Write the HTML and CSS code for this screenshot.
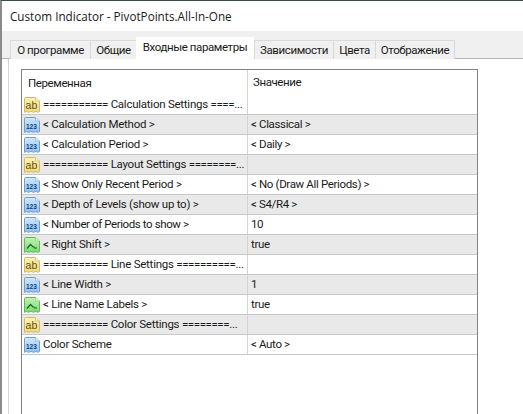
FILE: index.html
```html
<!DOCTYPE html>
<html lang="ru">
<head>
<meta charset="utf-8">
<title>Custom Indicator</title>
<link rel="stylesheet" href="styles.css">
</head>
<body>
<svg class="defs" width="0" height="0" aria-hidden="true">
  <defs>
    <linearGradient id="gy" x1="0" y1="0" x2="0" y2="1"><stop offset="0" stop-color="#fdf3b4"/><stop offset="1" stop-color="#f1d878"/></linearGradient>
    <linearGradient id="gb" x1="0" y1="0" x2="0" y2="1"><stop offset="0" stop-color="#d3e8fb"/><stop offset="1" stop-color="#8fc0ee"/></linearGradient>
    <linearGradient id="gg" x1="0" y1="0" x2="0" y2="1"><stop offset="0" stop-color="#c4f2b4"/><stop offset="1" stop-color="#76dc6c"/></linearGradient>
    <symbol id="doc-ab" viewBox="0 0 16 16">
      <path d="M.5 1.500a1 1 0 0 1 1-1h10l4 3.500v10.500l-1.500.8-2-.8-2.500.8-2.500-.8-2.500.8-2-.8-2 .8z" fill="url(#gy)" stroke="#cdb86e"/>
      <path d="M11.500 .5v3.500h4" fill="#fff8d8" stroke="#d8c987"/>
      <text x="1.600" y="11.500" class="glyph glyph-ab">ab</text>
    </symbol>
    <symbol id="doc-123" viewBox="0 0 16 16">
      <path d="M.5 1.500a1 1 0 0 1 1-1h10l4 3.500v10.500l-1.500.8-2-.8-2.500.8-2.500-.8-2.500.8-2-.8-2 .8z" fill="url(#gb)" stroke="#6f9fcf"/>
      <path d="M11.500 .5v3.500h4" fill="#e8f3fd" stroke="#9cc0e2"/>
      <text x="2" y="11.500" class="glyph glyph-num">123</text>
    </symbol>
    <symbol id="doc-bool" viewBox="0 0 16 16">
      <path d="M.5 1.500a1 1 0 0 1 1-1h10l4 3.500v10.500l-1.500.8-2-.8-2.500.8-2.500-.8-2.500.8-2-.8-2 .8z" fill="url(#gg)" stroke="#62b65c"/>
      <path d="M11.500 .5v3.500h4" fill="#e6fadf" stroke="#97d68e"/>
      <path d="M3 11.500l3.500-4 2.500 2.500h1.500M10 11h3" fill="none" stroke="#14632a" stroke-width="1.200"/>
    </symbol>
  </defs>
</svg>
<div class="window">
  <header class="titlebar">Custom Indicator - PivotPoints.All-In-One</header>
  <nav class="tabs">
    <div class="tab tab-about">О программе</div>
    <div class="tab tab-common">Общие</div>
    <div class="tab tab-active">Входные параметры</div>
    <div class="tab tab-deps">Зависимости</div>
    <div class="tab tab-colors">Цвета</div>
    <div class="tab tab-view">Отображение</div>
  </nav>
  <main class="panel">
    <div class="list">
      <div class="row head"><div class="cell name-h">Переменная</div><div class="cell val head-val">Значение</div></div>
      <div class="row"><div class="cell name"><svg class="ico"><use href="#doc-ab"/></svg><span class="label"><span class="eq">===========</span> Calculation Settings <span class="eq">====</span>...</span></div><div class="cell val"></div></div>
      <div class="row alt"><div class="cell name"><svg class="ico"><use href="#doc-123"/></svg><span class="label">&lt; Calculation Method &gt;</span></div><div class="cell val">&lt; Classical &gt;</div></div>
      <div class="row"><div class="cell name"><svg class="ico"><use href="#doc-123"/></svg><span class="label">&lt; Calculation Period &gt;</span></div><div class="cell val">&lt; Daily &gt;</div></div>
      <div class="row alt"><div class="cell name"><svg class="ico"><use href="#doc-ab"/></svg><span class="label"><span class="eq">===========</span> Layout Settings <span class="eq">========</span>...</span></div><div class="cell val"></div></div>
      <div class="row"><div class="cell name"><svg class="ico"><use href="#doc-123"/></svg><span class="label">&lt; Show Only Recent Period &gt;</span></div><div class="cell val">&lt; No (Draw All Periods) &gt;</div></div>
      <div class="row alt"><div class="cell name"><svg class="ico"><use href="#doc-123"/></svg><span class="label">&lt; Depth of Levels (show up to) &gt;</span></div><div class="cell val">&lt; S4/R4 &gt;</div></div>
      <div class="row"><div class="cell name"><svg class="ico"><use href="#doc-123"/></svg><span class="label label-tight">&lt; Number of Periods to show &gt;</span></div><div class="cell val">10</div></div>
      <div class="row alt"><div class="cell name"><svg class="ico"><use href="#doc-bool"/></svg><span class="label">&lt; Right Shift &gt;</span></div><div class="cell val">true</div></div>
      <div class="row"><div class="cell name"><svg class="ico"><use href="#doc-ab"/></svg><span class="label"><span class="eq">===========</span> Line Settings <span class="eq">==========</span>...</span></div><div class="cell val"></div></div>
      <div class="row alt"><div class="cell name"><svg class="ico"><use href="#doc-123"/></svg><span class="label">&lt; Line Width &gt;</span></div><div class="cell val">1</div></div>
      <div class="row"><div class="cell name"><svg class="ico"><use href="#doc-bool"/></svg><span class="label">&lt; Line Name Labels &gt;</span></div><div class="cell val">true</div></div>
      <div class="row alt"><div class="cell name"><svg class="ico"><use href="#doc-ab"/></svg><span class="label"><span class="eq">===========</span> Color Settings <span class="eq">========</span>...</span></div><div class="cell val"></div></div>
      <div class="row"><div class="cell name"><svg class="ico"><use href="#doc-123"/></svg><span class="label">Color Scheme</span></div><div class="cell val">&lt; Auto &gt;</div></div>
    </div>
  </main>
</div>
</body>
</html>
```

FILE: styles.css
```css
* { box-sizing: border-box; }
html, body { margin: 0; height: 100%; overflow: hidden; background: #fff; }
body { font-family: Roboto, "Liberation Sans", sans-serif; font-size: 11.5px; letter-spacing: -0.25px; color: #1a1a1a; }
.defs { display: block; }
.glyph { font-family: "Liberation Sans", sans-serif; letter-spacing: 0; }
.glyph-ab { font-size: 10.500px; fill: #5f500c; }
.glyph-num { font-size: 6.500px; font-weight: 700; fill: #123f86; }

.window { height: 414px; display: flex; flex-direction: column; border-top: 1px solid #3a4a48; border-left: 2px solid #8a8a8a; }
.titlebar { height: 30px; flex: none; padding: 6px 0 0 8px; font-family: "Open Sans", sans-serif; font-size: 11.7px; letter-spacing: 0; line-height: 18px; background: #fff; }

.tabs { height: 28px; flex: none; display: flex; align-items: flex-end; padding-left: 8px; background: #f0f0f0; border-bottom: 1px solid #b4b4b4; letter-spacing: -0.4px; }
.tab { height: 19px; margin-bottom: -1px; background: #f0f0f0; border: 1px solid #d9d9d9; border-bottom: 0; border-right: 0; text-align: center; line-height: 18px; white-space: nowrap; }
.tab-about { width: 80px; }
.tab-common { width: 46px; }
.tab-active { width: 118px; height: 22px; background: #fff; border: 0; line-height: 20px; position: relative; z-index: 1; }
.tab-deps { width: 79px; }
.tab-colors { width: 42px; }
.tab-view { width: 80px; border-right: 1px solid #d9d9d9; }

.panel { flex: 1; margin-left: 6px; padding: 10px 45px 0 12px; background: #fff; border-left: 1px solid #d4d4d4; min-height: 0; overflow: hidden; }
.list { height: 400px; border: 1px solid #828282; border-bottom: 0; background: #fff; }

.row { display: flex; height: 20px; border-bottom: 1px solid #c8c8c8; line-height: 18px; padding-bottom: 1px; }
.row.alt { background: #e9e9e9; }
.row.head { height: 25px; border-bottom: 0; letter-spacing: -0.4px; }
.cell { display: flex; align-items: center; min-width: 0; }
.name-h { width: 226px; flex: none; padding-left: 6px; border-right: 1px solid #d4d4d4; margin-bottom: -1px; }
.name { width: 226px; flex: none; padding-left: 2px; gap: 3px; border-right: 1px solid #d4d4d4; margin-bottom: -1px; }
.val { flex: 1; padding-left: 3px; white-space: nowrap; letter-spacing: -0.35px; }
.head-val { padding-left: 5px; letter-spacing: -0.4px; }
.label { white-space: nowrap; padding-bottom: 1px; }
.label-tight { letter-spacing: -0.4px; }
.eq { letter-spacing: -0.4px; }
.ico { width: 16px; height: 16px; flex: none; }
```
